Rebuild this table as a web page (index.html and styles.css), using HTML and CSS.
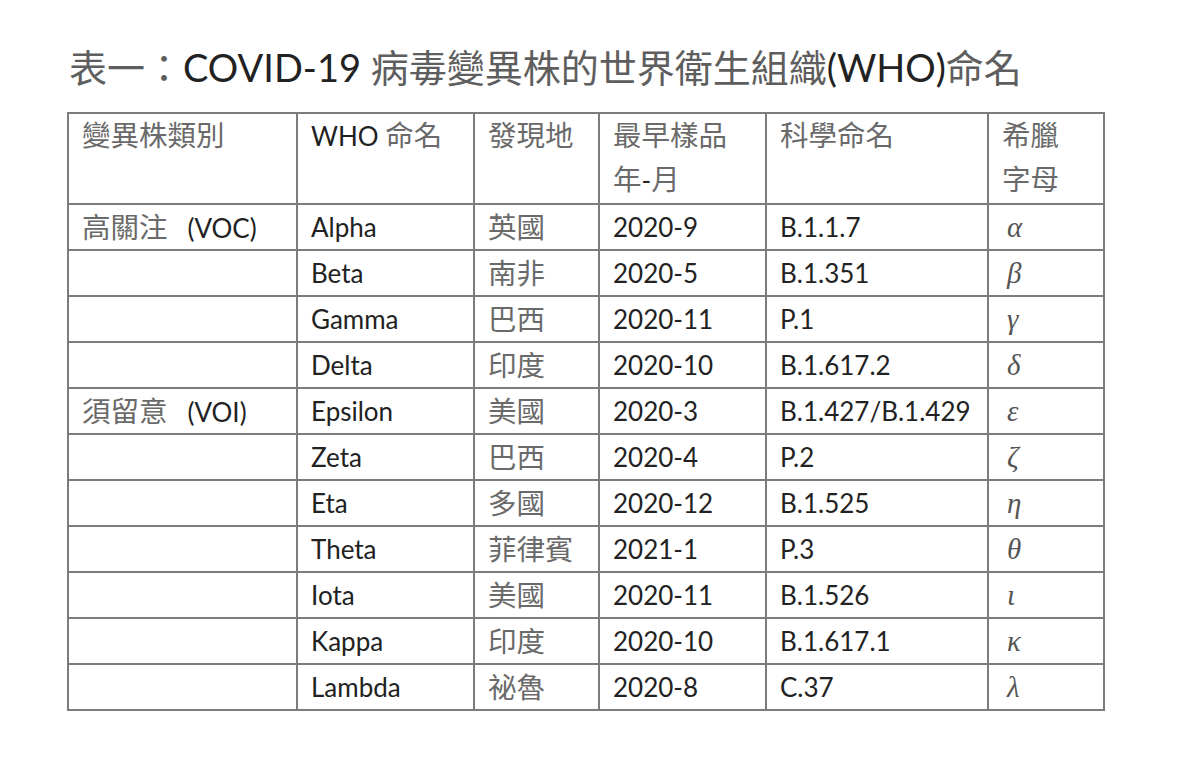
FILE: index.html
```html
<!DOCTYPE html>
<html lang="zh-Hant">
<head>
<meta charset="utf-8">
<title>COVID-19 變異株 WHO 命名</title>
<link rel="stylesheet" href="styles.css">
</head>
<body>
<div class="page">
  <h1 class="title"><span class="zh">表一：</span>COVID-19 <span class="zh">病毒變異株的世界衛生組織</span>(WHO)<span class="zh">命名</span></h1>
  <table class="grid">
    <colgroup>
      <col class="c1"><col class="c2"><col class="c3"><col class="c4"><col class="c5"><col class="c6">
    </colgroup>
    <thead>
      <tr class="head">
        <th><span class="zh">變異株類別</span></th>
        <th>WHO <span class="zh">命名</span></th>
        <th><span class="zh">發現地</span></th>
        <th><span class="zh">最早樣品</span><br><span class="zh">年</span>-<span class="zh">月</span></th>
        <th><span class="zh">科學命名</span></th>
        <th><span class="zh">希臘</span><br><span class="zh">字母</span></th>
      </tr>
    </thead>
    <tbody>
      <tr><td><span class="zh">高關注</span><span class="gap"></span>(VOC)</td><td>Alpha</td><td><span class="zh">英國</span></td><td>2020-9</td><td>B.1.1.7</td><td class="gk">α</td></tr>
      <tr><td></td><td>Beta</td><td><span class="zh">南非</span></td><td>2020-5</td><td>B.1.351</td><td class="gk">β</td></tr>
      <tr><td></td><td>Gamma</td><td><span class="zh">巴西</span></td><td>2020-11</td><td>P.1</td><td class="gk">γ</td></tr>
      <tr><td></td><td>Delta</td><td><span class="zh">印度</span></td><td>2020-10</td><td>B.1.617.2</td><td class="gk">δ</td></tr>
      <tr><td><span class="zh">須留意</span><span class="gap"></span>(VOI)</td><td>Epsilon</td><td><span class="zh">美國</span></td><td>2020-3</td><td>B.1.427/B.1.429</td><td class="gk">ε</td></tr>
      <tr><td></td><td>Zeta</td><td><span class="zh">巴西</span></td><td>2020-4</td><td>P.2</td><td class="gk">ζ</td></tr>
      <tr><td></td><td>Eta</td><td><span class="zh">多國</span></td><td>2020-12</td><td>B.1.525</td><td class="gk">η</td></tr>
      <tr><td></td><td>Theta</td><td><span class="zh">菲律賓</span></td><td>2021-1</td><td>P.3</td><td class="gk">θ</td></tr>
      <tr><td></td><td>Iota</td><td><span class="zh">美國</span></td><td>2020-11</td><td>B.1.526</td><td class="gk">ι</td></tr>
      <tr><td></td><td>Kappa</td><td><span class="zh">印度</span></td><td>2020-10</td><td>B.1.617.1</td><td class="gk">κ</td></tr>
      <tr><td></td><td>Lambda</td><td><span class="zh">祕魯</span></td><td>2020-8</td><td>C.37</td><td class="gk">λ</td></tr>
    </tbody>
  </table>
</div>
</body>
</html>
```

FILE: styles.css
```css
html, body {
  margin: 0;
  padding: 0;
  background: #ffffff;
}

body {
  font-family: Lato, "Noto Sans CJK TC", sans-serif;
  color: #222222;
}

.page {
  padding: 38px 0 0 67px;
}

.title {
  margin: 0 0 17px 2px;
  font-size: 38px;
  line-height: 56px;
  font-weight: 400;
  color: #222222;
  white-space: nowrap;
}

.zh {
  font-family: "Noto Sans CJK TC", sans-serif;
  color: #6a6a6a;
  font-weight: 400;
}

.title .zh {
  color: #5e5e5e;
}

.grid .zh {
  font-size: 28.5px;
  line-height: 1;
}

.grid {
  border-collapse: collapse;
  table-layout: fixed;
  width: 1036px;
  font-size: 26px;
}

.c1 { width: 229px; }
.c2 { width: 177px; }
.c3 { width: 125px; }
.c4 { width: 167px; }
.c5 { width: 222px; }
.c6 { width: 116px; }

.grid th,
.grid td {
  border: 2px solid #7c7c7c;
  padding: 0 0 0 13px;
  text-align: left;
  white-space: nowrap;
}

.grid th {
  font-weight: 400;
  vertical-align: top;
  height: 89px;
  line-height: 44px;
  padding-top: 0;
}

.grid td {
  vertical-align: middle;
  height: 44px;
  line-height: 30px;
}

.gap {
  display: inline-block;
  width: 20px;
}

.gk {
  font-family: "Liberation Serif", "DejaVu Serif", serif;
  font-style: italic;
  color: #555555;
  font-size: 29px;
  padding-left: 18px !important;
}
```
